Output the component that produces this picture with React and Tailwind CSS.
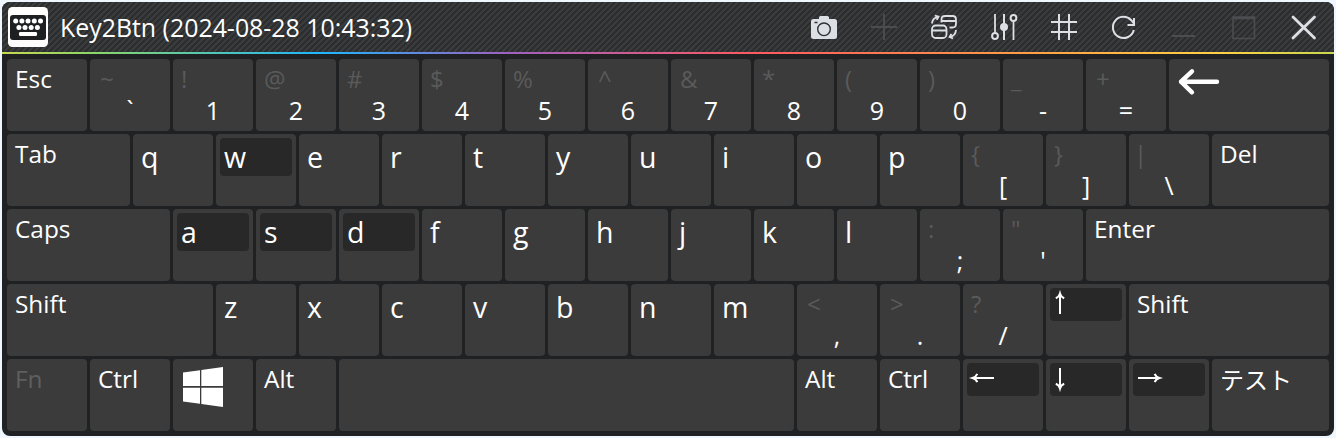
const k = (label, w = "w-20", extra = {}) => ({ label, w, ...extra });
const s = (hi, lo) => ({ hi, label: lo, w: "w-20", kind: "dual" });
const l = (ch, held = false) => ({ label: ch, w: "w-20", kind: "letter", held });
const arrow = (dir) => ({ label: dir, w: "w-20", kind: "arrow", held: true });

const rows = [
  [
    k("Esc"), s("~", "`"), s("!", "1"), s("@", "2"), s("#", "3"), s("$", "4"), s("%", "5"),
    s("^", "6"), s("&", "7"), s("*", "8"), s("(", "9"), s(")", "0"), s("_", "-"), s("+", "="),
    k("Backspace", "w-40", { kind: "back" }),
  ],
  [
    k("Tab", "w-[123px]"), l("q"), l("w", true), l("e"), l("r"), l("t"), l("y"), l("u"), l("i"),
    l("o"), l("p"), s("{", "["), s("}", "]"), s("|", "\\"), k("Del", "w-[117px]"),
  ],
  [
    k("Caps", "w-[163px]"), l("a", true), l("s", true), l("d", true), l("f"), l("g"), l("h"),
    l("j"), l("k"), l("l"), s(":", ";"), s('"', "'"), k("Enter", "w-[243px]"),
  ],
  [
    k("Shift", "w-[206px]"), l("z"), l("x"), l("c"), l("v"), l("b"), l("n"), l("m"),
    s("<", ","), s(">", "."), s("?", "/"), arrow("up"), k("Shift", "w-[200px]"),
  ],
  [
    k("Fn", "w-20", { dim: true }), k("Ctrl"), k("Windows", "w-20", { kind: "win" }), k("Alt"),
    k("", "w-[455px]"), k("Alt"), k("Ctrl"), arrow("left"), arrow("down"), arrow("right"),
    k("テスト", "w-[117px]", { kind: "jp" }),
  ],
];

const arrows = {
  up: "M10 26V5.5M5.8 10.3Q9 9 10 5.5Q11 9 14.2 10.3",
  down: "M10 5V25.5M5.8 20.7Q9 22 10 25.5Q11 22 14.2 20.7",
  left: "M27 15H5.5M10.3 10.8Q9 14 5.5 15Q9 16 10.3 19.2",
  right: "M5 15H26.5M21.7 10.8Q23 14 26.5 15Q23 16 21.7 19.2",
};

// Left padding per shifted symbol, where its side bearings differ from the rest.
const symbolPad = {
  "~": "pl-2.5",
  "+": "pl-2.5",
  "<": "pl-2.5",
  ">": "pl-2.5",
  "^": "pl-2.5",
  "&": "pl-[9px]",
  "|": "pl-[5px]",
};

function Legend({ item }) {
  switch (item.kind) {
    case "dual":
      return (
        <div className="flex h-full flex-col">
          <span className={`h-8 pt-1 text-[24px] leading-8 text-[#5a5a5a] ${symbolPad[item.hi] || "pl-2"}`}>{item.hi}</span>
          <span className="pt-[3px] text-center text-[25px] leading-8">{item.label}</span>
        </div>
      );
    case "letter":
      return (
        <div className="p-1">
          <div className={item.held ? "h-[38px] rounded bg-[#282828] pl-1" : "h-[38px] pl-1"}>
            <span className="block text-[28.5px] leading-[38px]">{item.label}</span>
          </div>
        </div>
      );
    case "arrow":
      return (
        <div className="p-1">
          <div className="h-[33px] rounded bg-[#282828]">
            <svg className="size-8" viewBox="0 0 32 32" fill="none" stroke="white" strokeWidth="2">
              <path d={arrows[item.label]} />
            </svg>
          </div>
        </div>
      );
    case "back":
      return (
        <svg className="ml-2 mt-2 h-8 w-12" viewBox="0 0 48 32" fill="none" stroke="white" strokeWidth="4.4" strokeLinecap="round" strokeLinejoin="round">
          <path d="M40 14.7H4M15 4.3L4 14.7L15 25.3" />
        </svg>
      );
    case "win":
      return (
        <svg className="ml-2.5 mt-2 size-10" viewBox="0 0 40 40" fill="white">
          <path d="M0 5.6L17 3.2V19H0ZM18.3 3L40 0V19H18.3ZM0 20.7H17V36.8L0 34.4ZM18.3 20.7H40V40L18.3 37Z" />
        </svg>
      );
    case "jp":
      return (
        <span className="block pl-2 pt-1 font-['Noto_Sans_CJK_JP',sans-serif] text-[24px] leading-8">
          {item.label}
        </span>
      );
    default:
      return (
        <span className={item.dim ? "block pl-2 pt-1 text-[24.4px] leading-8 text-[#5f5f5f]" : "block pl-2 pt-1 text-[24.4px] leading-8"}>
          {item.label}
        </span>
      );
  }
}

function AppIcon() {
  return (
    <svg className="size-10" viewBox="0 0 40 40">
      <rect width="40" height="40" rx="4.5" fill="#fffdfc" />
      <rect x="2" y="8" width="36" height="25" rx="3" fill="#1d1f20" />
      <g fill="white">
        {[7.7, 13.9, 20, 26.3, 32.5].map((x) => <circle key={x} cx={x} cy="14" r="2.5" />)}
        {[10.9, 17, 23.2, 29.4].map((x) => <circle key={x} cx={x} cy="20.5" r="2.5" />)}
        <rect x="11" y="25" width="18" height="4" rx="1.2" />
      </g>
    </svg>
  );
}

function Tool({ children, dim, sw = 2 }) {
  return (
    <button className={dim ? "flex size-[60px] items-center justify-center text-[#4b4d50]" : "flex size-[60px] items-center justify-center text-[#dcdfe3]"}>
      <svg className="size-7" viewBox="0 0 28 28" fill="none" stroke="currentColor" strokeWidth={sw}>
        {children}
      </svg>
    </button>
  );
}

function TitleBar() {
  return (
    <header className="flex h-[50px] items-center overflow-hidden bg-[repeating-linear-gradient(135deg,#2b2d2f_0px,#2b2d2f_2.12px,#393b3d_2.12px,#393b3d_4.24px)] pl-1.5">
      <AppIcon />
      <h1 className="ml-3 grow text-[24.9px] font-normal leading-8">Key2Btn (2024-08-28 10:43:32)</h1>
      <div className="flex h-[50px] items-center">
        <Tool>
          <path d="M3.5 6H9V4.5Q9 3 10.5 3H17.5Q19 3 19 4.5V6H24.5Q27 6 27 8.5V23.5Q27 26 24.5 26H3.5Q1 26 1 23.5V8.5Q1 6 3.5 6Z" fill="currentColor" stroke="none" />
          <circle cx="14" cy="16.3" r="6.3" stroke="#313335" strokeWidth="1.4" />
          <path d="M4.5 9.5H7.5" stroke="#313335" strokeWidth="1.4" />
        </Tool>
        <Tool dim sw={1.9}><path d="M1 14H27M14 1V27" /></Tool>
        <Tool sw={1.8}>
          <rect x="2" y="12.5" width="14.5" height="12.5" rx="3.5" /><path d="M2 17.5H16.5" />
          <path d="M11.5 9.5V6.5Q11.5 3 15 3H22.5Q26 3 26 6.5V11Q26 14.5 22.5 14.5H19.5M11.5 8H26" />
          <path d="M2 10.5Q2.3 5 8 3.8M4.8 2.5L8.5 3.6L6.8 6.8M26 17Q25.7 22.7 20 24M21.3 20.8L19.6 24.1L23 25.4" />
        </Tool>
        <Tool>
          <path d="M5 1V20M23.5 8V27" strokeWidth="1.8" /><path d="M14 1V27" />
          <circle cx="5" cy="23" r="2.9" /><circle cx="23.5" cy="5" r="2.9" />
          <circle cx="14" cy="14" r="4" fill="currentColor" stroke="none" />
        </Tool>
        <Tool><path d="M1 9H27M1 19H27M9 1V27M19 1V27" /></Tool>
        <Tool><path d="M23.8 17A10.6 10.6 0 1 1 21.3 7.2L24 10.5M24 5V12H17.5" /></Tool>
        <Tool dim><path d="M2 23H25" /></Tool>
        <Tool dim><path d="M3 4H24.5V25.5H3ZM3 5.5H24.5" strokeWidth="1.6" /></Tool>
        <Tool sw={2.8}><path d="M3 4L24.5 25M24.5 4L3 25" strokeLinecap="round" /></Tool>
      </div>
    </header>
  );
}

export default function App() {
  return (
    <div className="h-[438px] w-[1336px] overflow-hidden bg-[#eff6fe] p-0.5 font-['Open_Sans','Noto_Sans',sans-serif] text-white [font-stretch:94%]">
      <main className="h-[434px] overflow-hidden rounded-lg bg-[#1f2122]">
        <TitleBar />
        <div className="h-0.5 bg-[linear-gradient(90deg,#c8d850_0%,#8ad66a_7%,#1fb6ff_24%,#a060c0_38%,#ff5a60_57%,#ffa245_78%,#ffd045_91%,#c8d850_100%)]" />
        <div className="flex flex-col gap-[3px] px-[5px] pt-[5px]">
          {rows.map((row, r) => (
            <div key={r} className="flex gap-[3px]">
              {row.map((item, i) => (
                <div key={i} className={`h-[72px] shrink-0 rounded bg-[#3b3b3b] ${item.w}`}>
                  <Legend item={item} />
                </div>
              ))}
            </div>
          ))}
        </div>
      </main>
    </div>
  );
}
